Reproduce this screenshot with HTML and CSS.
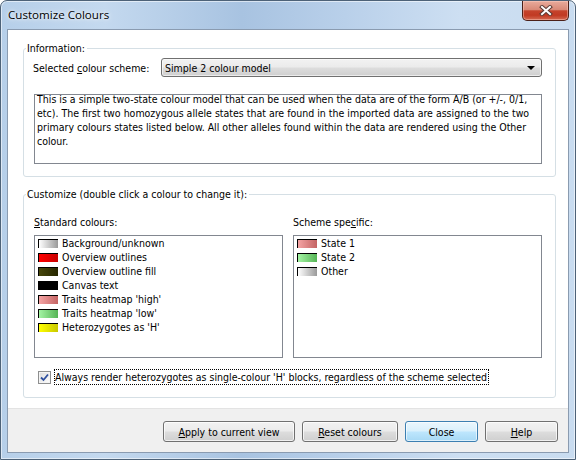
FILE: index.html
```html
<!DOCTYPE html>
<html>
<head>
<meta charset="utf-8">
<title>Customize Colours</title>
<link rel="stylesheet" href="styles.css">
</head>
<body>
<div class="window">
  <div class="titlebar">
    <span class="title">Customize Colours</span>
    <div class="close-btn">
      <svg width="14" height="11" viewBox="0 0 14 11">
        <path d="M3 2 L11 9 M11 2 L3 9" stroke="#5a3a34" stroke-width="4" stroke-linecap="square" fill="none"/>
        <path d="M3 2 L11 9 M11 2 L3 9" stroke="#ffffff" stroke-width="2" stroke-linecap="square" fill="none"/>
      </svg>
    </div>
  </div>
  <div class="client">
    <div class="main">
      <fieldset class="group group-info">
        <legend>Information:</legend>
        <div class="scheme-row">
          <span class="scheme-label">Selected <u>c</u>olour scheme:</span>
          <div class="combo">
            <span class="combo-text">Simple 2 colour model</span>
            <span class="combo-arrow"></span>
          </div>
        </div>
        <div class="desc">
          <p>This is a simple two-state colour model that can be used when the data are of the form A/B (or +/-, 0/1,<br>etc). The first two homozygous allele states that are found in the imported data are assigned to the two<br>primary colours states listed below. All other alleles found within the data are rendered using the Other<br>colour.</p>
        </div>
      </fieldset>
      <fieldset class="group group-custom">
        <legend>Customize (double click a colour to change it):</legend>
        <div class="lists">
          <div class="list-col">
            <div class="list-label"><u>S</u>tandard colours:</div>
            <ul class="list">
              <li><span class="sw sw-grey"></span>Background/unknown</li>
              <li><span class="sw sw-red"></span>Overview outlines</li>
              <li><span class="sw sw-olive"></span>Overview outline fill</li>
              <li><span class="sw sw-black"></span>Canvas text</li>
              <li><span class="sw sw-pink"></span>Traits heatmap 'high'</li>
              <li><span class="sw sw-green"></span>Traits heatmap 'low'</li>
              <li><span class="sw sw-yellow"></span>Heterozygotes as 'H'</li>
            </ul>
          </div>
          <div class="list-col">
            <div class="list-label">Scheme spe<u>c</u>ific:</div>
            <ul class="list">
              <li><span class="sw sw-pink"></span>State 1</li>
              <li><span class="sw sw-green"></span>State 2</li>
              <li><span class="sw sw-grey"></span>Other</li>
            </ul>
          </div>
        </div>
        <div class="check-row">
          <span class="checkbox">
            <svg width="9" height="9" viewBox="0 0 9 9">
              <path d="M1 4.5 L3.5 7 L8 1.5" stroke="#2e4f9e" stroke-width="1.8" fill="none"/>
            </svg>
          </span>
          <span class="check-text">Always render heterozygotes as single-colour 'H' blocks, regardless of the scheme selected</span>
        </div>
      </fieldset>
    </div>
    <div class="buttons">
      <button class="btn btn-apply"><u>A</u>pply to current view</button>
      <button class="btn btn-reset"><u>R</u>eset colours</button>
      <button class="btn btn-close btn-default">Close</button>
      <button class="btn btn-help"><u>H</u>elp</button>
    </div>
  </div>
</div>
</body>
</html>
```

FILE: styles.css
```css
* {
  box-sizing: border-box;
}

html, body {
  margin: 0;
  padding: 0;
}

body {
  width: 576px;
  height: 460px;
  overflow: hidden;
  background: #ffffff;
  color: #000000;
  font-family: "DejaVu Sans Condensed", "DejaVu Sans", "Liberation Sans", sans-serif;
  font-size: 10.5px;
  line-height: 14px;
}

.window {
  width: 576px;
  height: 460px;
  display: flex;
  flex-direction: column;
  border: 1px solid #4d6278;
  border-radius: 7px 7px 0 0;
  background: linear-gradient(90deg, #b6cfe9 0%, #c4d9ef 18%, #a8c3e1 42%, #b9d0ea 60%, #cddff2 80%, #c9dcf0 100%);
  box-shadow: inset 0 0 0 1px rgba(255, 255, 255, 0.55);
}

.titlebar {
  height: 28px;
  flex: none;
  display: flex;
  align-items: flex-start;
  padding: 0 6px 0 7px;
}

.title {
  font-family: "Open Sans", "Noto Sans", sans-serif;
  font-size: 11.6px;
  line-height: 28px;
  color: #000000;
  text-shadow: 0 0 6px rgba(255, 255, 255, 0.9), 0 0 3px rgba(255, 255, 255, 0.9);
}

.close-btn {
  margin-left: auto;
  width: 47px;
  height: 20px;
  display: flex;
  align-items: center;
  justify-content: center;
  border: 1px solid #4b2018;
  border-top: none;
  border-radius: 0 0 5px 5px;
  background: linear-gradient(180deg, #e8ab9c 0%, #d98a78 45%, #c5432c 52%, #c13a23 75%, #d46a52 100%);
  box-shadow: inset 0 0 0 1px rgba(255, 210, 200, 0.45);
}

.client {
  flex: 1;
  margin: 0 6px 6px 6px;
  border: 1px solid #8a9bb0;
  background: #ffffff;
  display: flex;
  flex-direction: column;
}

.main {
  padding: 11px 12px 10px 15px;
  background: #ffffff;
}

.group {
  margin: 0;
  min-width: 0;
  border: 1px solid #d5dfe5;
  border-radius: 3px;
  padding: 3px 13px 12px 10px;
}

.group legend {
  margin-left: -8px;
  padding: 0 2px 0 1px;
  line-height: 14px;
}

.group-custom {
  margin-top: 10px;
  padding-top: 14px;
}

.scheme-row {
  display: flex;
  align-items: center;
  height: 19px;
}

.scheme-label {
  margin-left: -1px;
}

.combo {
  margin-left: auto;
  width: 381px;
  height: 19px;
  display: flex;
  align-items: center;
  padding: 0 6px 0 3px;
  border: 1px solid #707070;
  border-radius: 3px;
  background: linear-gradient(180deg, #f2f2f2 0%, #ebebeb 48%, #dddddd 52%, #cfcfcf 100%);
  box-shadow: inset 0 0 0 1px rgba(255, 255, 255, 0.6);
}

.combo-text {
  flex: 1;
}

.combo-arrow {
  width: 0;
  height: 0;
  border-left: 4px solid transparent;
  border-right: 4px solid transparent;
  border-top: 4px solid #000000;
}

.desc {
  margin-top: 17px;
  height: 70px;
  border: 1px solid #828790;
  padding: 0 2px;
  white-space: nowrap;
}

.desc p {
  margin: -3px 0 0 0;
}

.lists {
  display: grid;
  grid-template-columns: 249px 249px;
  column-gap: 10px;
}

.list-label {
  margin-bottom: 6px;
}

.list {
  list-style: none;
  margin: 0;
  padding: 0;
  height: 123px;
  border: 1px solid #828790;
  background: #ffffff;
}

.list li {
  display: flex;
  align-items: flex-start;
  height: 14px;
  white-space: nowrap;
}

.sw {
  flex: none;
  width: 20px;
  height: 9px;
  margin: 3px 4px 0 3px;
  border-left: 1px solid #000000;
  border-top: 1px solid #000000;
}

.sw-grey { background: linear-gradient(90deg, #ffffff, #9a9a9a); }
.sw-red { background: linear-gradient(90deg, #ff0000, #c80000); }
.sw-olive { background: linear-gradient(90deg, #46460a, #262600); }
.sw-black { background: #000000; }
.sw-pink { background: linear-gradient(90deg, #f4a4a4, #c46464); }
.sw-green { background: linear-gradient(90deg, #a4f4a4, #56b456); }
.sw-yellow { background: linear-gradient(90deg, #ffff00, #c8c800); }

.check-row {
  margin-top: 11px;
  height: 16px;
  display: flex;
  align-items: center;
}

.checkbox {
  margin-left: 4px;
  width: 13px;
  height: 13px;
  display: flex;
  align-items: center;
  justify-content: center;
  border: 1px solid #8e8f8f;
  background: linear-gradient(135deg, #dcdcdc 0%, #f0f0f0 60%, #ffffff 100%);
  box-shadow: inset 0 0 0 1px #f4f4f4;
}

.check-text {
  margin-left: 3px;
  height: 16px;
  border: 1px dotted #000000;
  padding: 0 1px 0 0;
  line-height: 14px;
  white-space: nowrap;
}

.buttons {
  flex: 1;
  display: flex;
  justify-content: flex-end;
  align-items: flex-start;
  gap: 7px;
  padding: 12px 10px 0 0;
  background: #f0f0f0;
  border-top: 1px solid #e3e3e3;
}

.btn {
  height: 21px;
  padding: 0;
  font: inherit;
  color: #000000;
  border: 1px solid #707070;
  border-radius: 3px;
  background: linear-gradient(180deg, #f2f2f2 0%, #ebebeb 48%, #dddddd 52%, #cfcfcf 100%);
  box-shadow: inset 0 0 0 1px rgba(255, 255, 255, 0.7);
}

.btn-apply { width: 132px; }
.btn-reset { width: 96px; }
.btn-close { width: 73px; }
.btn-help { width: 73px; }

.btn-default {
  border-color: #3c7fb1;
  background: linear-gradient(180deg, #eaf6fd 0%, #d9f0fc 48%, #bee6fd 52%, #a7d9f5 100%);
  box-shadow: inset 0 0 0 1px rgba(255, 255, 255, 0.6);
}
```
